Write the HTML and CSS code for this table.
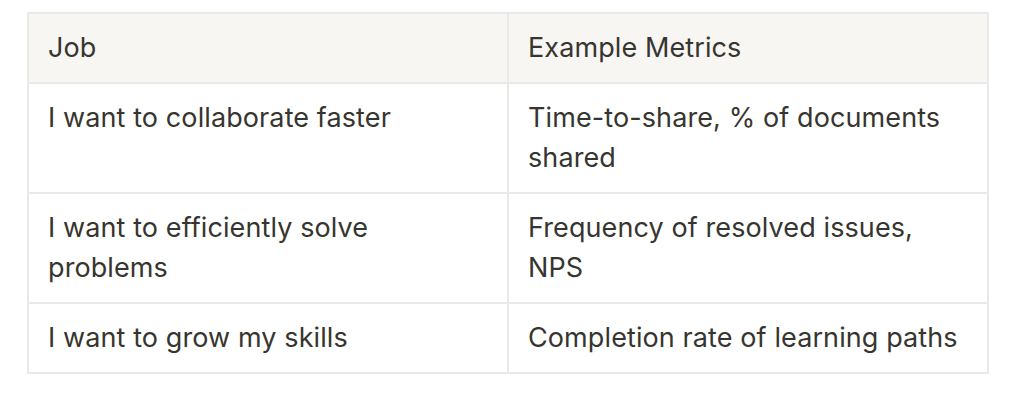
FILE: index.html
```html
<!DOCTYPE html>
<html>
<head>
<meta charset="utf-8">
<link rel="stylesheet" href="styles.css">
</head>
<body>
<table class="jobs">
  <thead>
    <tr><th>Job</th><th>Example Metrics</th></tr>
  </thead>
  <tbody>
    <tr><td>I want to collaborate faster</td><td>Time-to-share, % of documents shared</td></tr>
    <tr><td>I want to efficiently solve problems</td><td>Frequency of resolved issues, NPS</td></tr>
    <tr><td>I want to grow my skills</td><td>Completion rate of learning paths</td></tr>
  </tbody>
</table>
</body>
</html>
```
FILE: styles.css
```css
html, body {
  margin: 0;
  background: #ffffff;
}
body {
  padding: 12px 0 0 27px;
  font-family: Inter, "Noto Sans", sans-serif;
  color: #37352f;
}
.jobs {
  border-collapse: collapse;
  width: 962px;
  table-layout: fixed;
  font-size: 27px;
  letter-spacing: 0.1px;
  line-height: 40px;
}
.jobs th,
.jobs td {
  border: 2px solid #e9e9e7;
  padding: 14px 20px 14px 19px;
  text-align: left;
  vertical-align: top;
  font-weight: 400;
}
.jobs th {
  background: #f7f6f3;
}
```
